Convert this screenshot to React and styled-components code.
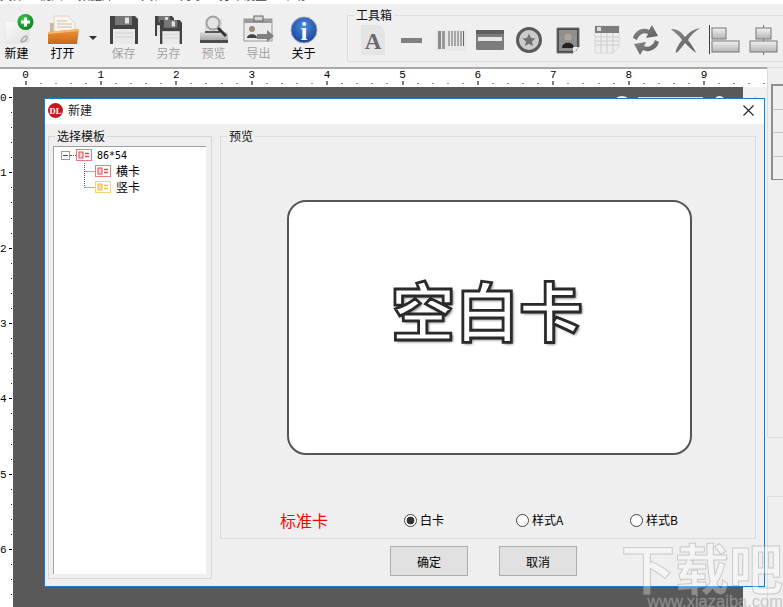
import React from "react";
import styled, { createGlobalStyle } from "styled-components";

const GlobalStyle = createGlobalStyle`
    html, body {
        margin: 0;
        padding: 0;
        background: #fff;
    }
    body {
        font-family: "Noto Sans CJK SC", "Liberation Sans", sans-serif;
        font-size: 12px;
        color: #000;
    }
`;

const Page = styled.div`
    position: relative;
    width: 783px;
    height: 607px;
    overflow: hidden;
    display: flex;
    flex-direction: column;
    background: #fff;
`;

const MenuStrip = styled.div`
    height: 4px;
    flex: none;
    overflow: hidden;
    display: flex;
    gap: 15px;
    background: #fff;
`;

const MenuItem = styled.span`
    margin-top: -12px;
    font-size: 12px;
    line-height: 14px;
    white-space: nowrap;
    color: #444;
`;

const Toolbar = styled.div`
    height: 63px;
    flex: none;
    display: flex;
    background: #efefef;
`;

const ToolButton = styled.div`
    width: ${(p) => p.$width || 45}px;
    margin-right: ${(p) => p.$gap || 0}px;
    flex: none;
    padding-top: 10px;
    display: flex;
    flex-direction: column;
    align-items: center;
`;

const ToolIcon = styled.svg`
    width: ${(p) => p.$size || 30}px;
    height: 30px;
    flex: none;
    overflow: visible;
`;

const ToolLabel = styled.span`
    margin-top: 2px;
    font-size: 12px;
    line-height: 14px;
    white-space: nowrap;
    color: ${(p) => (p.$disabled ? "#a3a3a3" : "#000")};
`;

const DropArrow = styled.div`
    width: 16px;
    flex: none;
    display: flex;
    justify-content: center;
    padding-top: 32px;

    &::before {
        content: "";
        width: 0;
        height: 0;
        border-left: 4px solid transparent;
        border-right: 4px solid transparent;
        border-top: 4px solid #333;
    }
`;

const ToolBox = styled.fieldset`
    margin: 4px 0 0 21px;
    padding: 0 0 0 5px;
    height: 54px;
    min-width: 0;
    flex: none;
    width: 470px;
    box-sizing: border-box;
    border: 1px solid #dcdcdc;
    display: flex;
`;

const GroupTitle = styled.legend`
    margin-left: ${(p) => p.$inset ?? 6}px;
    padding: 0 2px;
    font-size: 12px;
    line-height: 14px;
    color: #111;
`;

const BoxCell = styled.div`
    width: 39px;
    flex: none;
    display: flex;
    justify-content: center;
    padding-top: 3px;
`;

const Workspace = styled.div`
    flex: 1;
    min-height: 0;
    display: flex;
`;

const EditorArea = styled.div`
    width: 767px;
    flex: none;
    display: flex;
    flex-direction: column;
    border-top: 2px solid #a9a9a9;
    box-sizing: border-box;
`;

const RulerSvg = styled.svg`
    display: block;
    flex: none;
    background: #fff;
`;

const RulerText = styled.text`
    font-family: "Liberation Mono", monospace;
    font-size: 11px;
    fill: #000;
`;

const EditorRow = styled.div`
    flex: 1;
    min-height: 0;
    display: flex;
`;

const Canvas = styled.div`
    position: relative;
    width: 730px;
    flex: none;
    background: #595959;
`;

const CanvasShape = styled.div`
    position: absolute;
    top: ${(p) => p.$top}px;
    left: ${(p) => p.$left}px;
    width: ${(p) => p.$width}px;
    height: 20px;
    background: ${(p) => p.$color};
    border-radius: ${(p) => (p.$round ? "50%" : "0")};
`;

const ScrollColumn = styled.div`
    width: 24px;
    flex: none;
    background: #f1f1f1;
    display: flex;
    justify-content: center;
    padding-top: 9px;
    box-sizing: border-box;
`;

const ScrollArrow = styled.svg`
    width: 10px;
    height: 10px;
`;

const SidePanel = styled.div`
    flex: 1;
    display: flex;
    flex-direction: column;
    background: #efefef;
`;

const PanelTop = styled.div`
    height: 371px;
    flex: none;
    box-sizing: border-box;
    padding: 16px 0 0 3px;
    border-left: 1px solid #dcdcdc;
    border-bottom: 1px solid #dcdcdc;
    border-top: 1px solid #dcdcdc;
`;

const PropGrid = styled.div`
    height: 96px;
    box-sizing: border-box;
    border-left: 2px solid #8f8f8f;
    border-top: 2px solid #8f8f8f;
    border-bottom: 1px solid #8f8f8f;
    display: flex;
    flex-direction: column;
`;

const PropRow = styled.div`
    flex: 1;
    border-bottom: 1px solid #c4c4c4;

    &:last-child {
        border-bottom: none;
    }
`;

const PanelBottom = styled.div`
    margin-top: 58px;
    flex: 1;
    border-left: 1px solid #dcdcdc;
    border-top: 1px solid #dcdcdc;
`;

const Dialog = styled.div`
    position: absolute;
    left: 44px;
    top: 98px;
    width: 721px;
    height: 489px;
    box-sizing: border-box;
    border: 1px solid #0a7fd9;
    background: #efefef;
    display: flex;
    flex-direction: column;
`;

const TitleBar = styled.div`
    height: 25px;
    flex: none;
    box-sizing: border-box;
    background: #fff;
    display: flex;
    align-items: center;
    padding: 0 10px 3px 3px;
`;

const DialogTitle = styled.span`
    margin-left: 5px;
    flex: 1;
    font-size: 12px;
    line-height: 14px;
    color: #222;
`;

const DialogBody = styled.div`
    flex: 1;
    min-height: 0;
    padding: 5px 0 0 3px;
    display: flex;
    gap: 8px;
`;

const TemplateGroup = styled.fieldset`
    margin: 0;
    padding: 3px 5px 4px 4px;
    width: 164px;
    height: 450px;
    box-sizing: border-box;
    min-width: 0;
    border: 1px solid #d6d6d6;
`;

const Tree = styled.div`
    height: 428px;
    box-sizing: border-box;
    background: #fff;
    border-left: 1px solid #a0a0a0;
    border-top: 1px solid #a0a0a0;
`;

const TreeRow = styled.div`
    height: 16px;
    display: flex;
    align-items: center;
    padding-left: ${(p) => p.$indent}px;
`;

const Expander = styled.span`
    width: 9px;
    height: 9px;
    box-sizing: border-box;
    flex: none;
    border: 1px solid #999;
    background: #fff;
    display: flex;
    align-items: center;
    justify-content: center;

    &::before {
        content: "";
        width: 5px;
        height: 1px;
        background: #2a4fa8;
    }
`;

const DotStub = styled.span`
    width: 6px;
    flex: none;
    border-top: 1px dotted #555;
`;

const TreeLabel = styled.span`
    margin-left: 5px;
    font-size: 12px;
    line-height: 16px;
    white-space: nowrap;
`;

const SizeLabel = styled(TreeLabel)`
    font-family: "DejaVu Sans Mono", monospace;
    font-size: 10px;
    padding-top: 1px;
`;

const RightColumn = styled.div`
    width: 536px;
    flex: none;
    display: flex;
    flex-direction: column;
`;

const PreviewGroup = styled.fieldset`
    margin: 0;
    padding: 57px 0 8px;
    min-width: 0;
    box-sizing: border-box;
    border: 1px solid #dcdcdc;
`;

const CardPreview = styled.div`
    margin-left: 66px;
    width: 405px;
    height: 255px;
    box-sizing: border-box;
    border: 2px solid #555;
    border-radius: 19px;
    background: #fff;
    display: flex;
    align-items: center;
    justify-content: center;
    padding: 0 5px 39px 0;
`;

const BlankTitle = styled.span`
    font-family: "Noto Sans CJK SC", sans-serif;
    font-size: 64px;
    font-weight: 700;
    line-height: 70px;
    color: #fff;
    -webkit-text-stroke: 2.8px #2a2a2a;
    text-shadow: 1px 1px 3px #666, 2px 2px 3px #aaa;
    white-space: nowrap;
`;

const OptionRow = styled.div`
    margin-top: 55px;
    height: 20px;
    padding-left: 59px;
    display: grid;
    grid-template-columns: 124px 112px 114px auto;
    align-items: center;
`;

const CardKind = styled.span`
    font-size: 16px;
    line-height: 20px;
    color: #ff0000;
`;

const RadioLabel = styled.label`
    display: flex;
    align-items: center;
    gap: 3px;
    font-size: 12px;
    line-height: 16px;
`;

const RadioInput = styled.input`
    appearance: none;
    margin: 0;
    width: 13px;
    height: 13px;
    box-sizing: border-box;
    border: 1px solid #444;
    border-radius: 50%;
    background: #fff;

    &:checked {
        background: radial-gradient(circle, #333 0 3.6px, #fff 4.2px);
    }
`;

const ButtonRow = styled.div`
    margin: 7px 0 0 170px;
    display: flex;
    gap: 31px;
`;

const DialogButton = styled.button`
    width: 78px;
    height: 30px;
    padding: 0;
    box-sizing: border-box;
    border: 1px solid #adadad;
    background: #e1e1e1;
    font-family: inherit;
    font-size: 12px;
    color: #000;
`;

const Watermark = styled.div`
    position: absolute;
    right: 0;
    bottom: -1px;
    width: 166px;
    display: flex;
    flex-direction: column;
    align-items: flex-end;
    pointer-events: none;
`;

const WatermarkMain = styled.span`
    font-family: "Noto Sans CJK SC", sans-serif;
    font-size: 54px;
    font-weight: 700;
    line-height: 54px;
    color: rgba(255, 255, 255, 0.32);
    -webkit-text-stroke: 1px rgba(110, 110, 110, 0.3);
    white-space: nowrap;
`;

const WatermarkUrl = styled.span`
    font-family: "Liberation Sans", sans-serif;
    font-size: 16.5px;
    line-height: 14px;
    color: rgba(170, 170, 170, 0.55);
    -webkit-text-stroke: 0.4px rgba(200, 200, 200, 0.3);
    white-space: nowrap;
`;

const menus = ["文件", "视图", "数据库", "工具栏", "对象", "打印设置", "帮助"];

const rulerMarks = [0, 1, 2, 3, 4, 5, 6, 7, 8, 9];

const TopRuler = () => {
    const dots = [];
    for (let i = 0; i < 50; i++) {
        if (i % 5 !== 0) dots.push(12.5 + i * 15.08);
    }
    return (
        <RulerSvg width="767" height="18" viewBox="0 0 767 18">
            {rulerMarks.map((n) => {
                const x = 25.5 + n * 75.4;
                return (
                    <g key={n}>
                        <RulerText x={x} y="9" textAnchor="middle">{n}</RulerText>
                        <rect x={Math.round(x) - 0.5} y="12" width="1" height="4" fill="#000" />
                    </g>
                );
            })}
            {dots.map((x) => (
                <rect key={x} x={Math.round(x + 13) - 0.5} y="14" width="1" height="1" fill="#222" />
            ))}
        </RulerSvg>
    );
};

const LeftRuler = () => {
    const dots = [];
    for (let i = 0; i < 36; i++) {
        if (i % 5 !== 0) dots.push(i * 15.07);
    }
    return (
        <RulerSvg width="13" height="521" viewBox="0 0 13 521">
            {[0, 1, 2, 3, 4, 5, 6].map((n) => {
                const y = 10 + n * 75.33;
                return (
                    <g key={n}>
                        <RulerText x="0" y={y + 4}>{n}</RulerText>
                        <rect x="9" y={Math.round(y)} width="3" height="1" fill="#000" />
                    </g>
                );
            })}
            {dots.map((y) => (
                <rect key={y} x="11" y={Math.round(y + 10)} width="1" height="1" fill="#222" />
            ))}
        </RulerSvg>
    );
};

const NewIcon = () => (
    <ToolIcon viewBox="0 0 30 30">
        <defs>
            <linearGradient id="newPage" x1="0" y1="0" x2="1" y2="1">
                <stop offset="0" stopColor="#fcfcfc" />
                <stop offset="1" stopColor="#dedede" />
            </linearGradient>
            <radialGradient id="newPlus" cx="0.4" cy="0.35" r="0.7">
                <stop offset="0" stopColor="#43d04a" />
                <stop offset="1" stopColor="#0a7a24" />
            </radialGradient>
        </defs>
        <path d="M3 7 L20 7 L27 14 L27 29 L3 29 Z" fill="url(#newPage)" stroke="#e6e6e6" />
        <path d="M19 27 C21 23 24 21 25 23 C26 25 22 28 20 28 Z" fill="none" stroke="#a8a8a8" strokeWidth="1.5" />
        <circle cx="23.5" cy="8" r="8" fill="url(#newPlus)" />
        <path d="M23.5 3.5 V12.5 M19 8 H28" stroke="#fff" strokeWidth="3" />
    </ToolIcon>
);

const OpenIcon = () => (
    <ToolIcon viewBox="0 0 32 30" $size={32}>
        <defs>
            <linearGradient id="openFolder" x1="0" y1="0" x2="0" y2="1">
                <stop offset="0" stopColor="#ef9638" />
                <stop offset="1" stopColor="#c9661a" />
            </linearGradient>
        </defs>
        <path d="M3 9 L8 9 L8 20 L3 20 Z" fill="#c9b9a0" />
        <path d="M7 2 L21 2 L28 9 L28 20 L7 20 Z" fill="#f7f4ec" stroke="#ddd6c6" />
        <path d="M10 7 H20 M10 10 H25 M10 13 H25" stroke="#c9c0ae" />
        <path d="M1 18 L32 15 L30 30 L1 30 Z" fill="url(#openFolder)" />
        <path d="M1 18 L32 15 L32 17 L1 20 Z" fill="#f7b96a" />
    </ToolIcon>
);

const Floppy = ({ x = 0, y = 0, w = 28, h = 28 }) => (
    <g transform={`translate(${x} ${y}) scale(${w / 28} ${h / 28})`}>
        <path d="M0 0 H25 L28 3 V28 H0 Z" fill="#434343" />
        <rect x="5" y="0" width="17" height="9" fill="#777" />
        <rect x="15" y="1.5" width="4" height="6" fill="#e4e4e4" />
        <rect x="3" y="13" width="22" height="15" fill="#e9e9e9" />
        <path d="M5 17 H23 M5 21 H23" stroke="#cfcfcf" />
    </g>
);

const SaveIcon = () => (
    <ToolIcon viewBox="0 0 30 30">
        <g transform="translate(1 2)"><Floppy /></g>
    </ToolIcon>
);

const SaveAsIcon = () => (
    <ToolIcon viewBox="0 0 30 30">
        <Floppy x={1} y={2} w={19} h={20} />
        <Floppy x={6} y={6} w={22} h={24} />
    </ToolIcon>
);

const PreviewIcon = () => (
    <ToolIcon viewBox="0 0 30 30">
        <defs>
            <linearGradient id="printerBody" x1="0" y1="0" x2="0" y2="1">
                <stop offset="0" stopColor="#dedede" />
                <stop offset="1" stopColor="#a2a2a2" />
            </linearGradient>
        </defs>
        <rect x="6" y="5" width="17" height="13" fill="#dcdcdc" />
        <path d="M1 18 H29 V27 H1 Z" fill="url(#printerBody)" />
        <rect x="1" y="26" width="28" height="3" fill="#4c4c4c" />
        <rect x="6" y="17" width="15" height="2" fill="#555" />
        <circle cx="14" cy="9" r="6.5" fill="#e4e4e4" stroke="#a2a2a2" strokeWidth="2" />
        <path d="M19 14 L27 22" stroke="#333" strokeWidth="3" />
    </ToolIcon>
);

const ExportIcon = () => (
    <ToolIcon viewBox="0 0 32 30" $size={32}>
        <rect x="1" y="5" width="28" height="22" fill="#eaeaea" stroke="#9a9a9a" />
        <rect x="1" y="5" width="28" height="4" fill="#9a9a9a" />
        <rect x="11" y="2" width="9" height="5" fill="#d8d8d8" stroke="#666" />
        <circle cx="9" cy="15" r="3" fill="#9a8a78" />
        <path d="M4 24 C4 19 14 19 14 24 Z" fill="#444" />
        <path d="M14 20 H24 V16 L31 22 L24 28 V25 H14 Z" fill="#808080" />
    </ToolIcon>
);

const AboutIcon = () => (
    <ToolIcon viewBox="0 0 30 30">
        <defs>
            <radialGradient id="aboutBall" cx="0.5" cy="0.35" r="0.7">
                <stop offset="0" stopColor="#4d8be0" />
                <stop offset="1" stopColor="#123f96" />
            </radialGradient>
        </defs>
        <circle cx="15" cy="16" r="13" fill="url(#aboutBall)" stroke="#9aa4b4" />
        <text x="15" y="26" textAnchor="middle" fontFamily="Liberation Serif, serif" fontWeight="700" fontSize="25" fill="#fff">i</text>
    </ToolIcon>
);

const GrayDefs = () => (
    <svg width="0" height="0" style={{ position: "absolute" }}>
        <defs>
            <linearGradient id="grayBar" x1="0" y1="0" x2="0" y2="1">
                <stop offset="0" stopColor="#f2f2f2" />
                <stop offset="1" stopColor="#b4b4b4" />
            </linearGradient>
            <linearGradient id="grayArrow" x1="0" y1="0" x2="1" y2="1">
                <stop offset="0" stopColor="#8a8a8a" />
                <stop offset="1" stopColor="#5c5c5c" />
            </linearGradient>
        </defs>
    </svg>
);

const boxIcons = [
    <>
        <path d="M3 0 H21 L27 6 V30 H3 Z" fill="#e4e4e4" />
        <text x="15" y="24" textAnchor="middle" fontFamily="Liberation Serif, serif" fontWeight="700" fontSize="23" fill="#6a6a6a">A</text>
    </>,
    <rect x="4" y="13" width="21" height="5" fill="#808080" />,
    <>
        <rect x="0" y="5" width="30" height="21" fill="#e8e8e8" />
        <rect x="2" y="6" width="3" height="18" fill="#8a8a8a" />
        <rect x="6" y="6" width="3" height="18" fill="#9a9a9a" />
        <path d="M13 6 V21 M16 6 V21 M19 6 V21 M22 6 V21 M25 6 V21 M27.5 6 V21" stroke="#666" />
    </>,
    <>
        <rect x="1" y="5" width="28" height="20" rx="1" fill="#7c7c7c" />
        <rect x="1" y="5" width="28" height="4" fill="#5f5f5f" />
        <rect x="3" y="12" width="24" height="4" fill="#e6e6e6" />
    </>,
    <>
        <circle cx="15" cy="15" r="11.5" fill="#cbcbcb" stroke="#5a5a5a" strokeWidth="3" />
        <path d="M15 8.5 L17 13 L21.5 13.5 L18 16.5 L19 21 L15 18.7 L11 21 L12 16.5 L8.5 13.5 L13 13 Z" fill="#707070" />
    </>,
    <>
        <path d="M4 3 H26 V22 L20 28 H4 Z" fill="#4a4a4a" stroke="#777" />
        <rect x="6" y="5" width="18" height="21" fill="#8f8f8f" />
        <circle cx="15" cy="12" r="3.5" fill="#b0a49a" />
        <path d="M9 23 C9 16 21 16 21 23 Z" fill="#222" />
        <path d="M20 28 L26 22 L20 22 Z" fill="#eee" />
    </>,
    <>
        <path d="M3 1 H27 V22 L21 28 H3 Z" fill="#ededed" stroke="#dadada" />
        <rect x="3" y="1" width="24" height="7" fill="#7c7c7c" />
        <rect x="5" y="2" width="4" height="4" fill="#dcdcdc" />
        <path d="M3 12 H27 M3 16 H27 M3 20 H27 M9 8 V28 M15 8 V28 M21 8 V28" stroke="#cecece" />
    </>,
    <>
        <path d="M2 13 C4 5 13 2 18 5 L21 0 L27 11 L15 13 L17 9 C13 7 8 9 6 15 Z" fill="url(#grayArrow)" />
        <path d="M28 17 C26 25 17 28 12 25 L9 30 L3 19 L15 17 L13 21 C17 23 22 21 24 15 Z" fill="url(#grayArrow)" />
    </>,
    <>
        <path d="M1 4 C8 3 13 9 15 12 C19 7 24 4 30 3 C24 7 20 11 18 15 C21 19 24 23 26 28 C21 24 18 21 15 18 C12 22 9 26 6 28 C5 26 8 20 12 15 C9 10 5 8 1 4 Z" fill="url(#grayArrow)" />
    </>,
    <>
        <rect x="0" y="0" width="1" height="29" fill="#444" />
        <rect x="3" y="3" width="14" height="11" fill="url(#grayBar)" stroke="#777" />
        <rect x="3" y="16" width="27" height="11" fill="url(#grayBar)" stroke="#777" />
    </>,
    <>
        <rect x="15" y="0" width="1" height="30" fill="#777" />
        <rect x="8" y="3" width="15" height="11" fill="url(#grayBar)" stroke="#777" />
        <rect x="2" y="16" width="27" height="11" fill="url(#grayBar)" stroke="#777" />
    </>,
];

const CardGlyph = ({ color, fill }) => (
    <svg width="16" height="12" viewBox="0 0 16 12" style={{ flex: "none", display: "block" }}>
        <rect x="0.5" y="0.5" width="15" height="11" fill="#fff" stroke={color} />
        <rect x="3" y="3" width="4" height="6" fill="#fbd3d3" stroke={fill} />
        <path d="M9 4.5 H13 M9 7.5 H13" stroke={fill} strokeWidth="1.4" />
    </svg>
);

const TreeLink = ({ last }) => (
    <svg width="11" height="16" viewBox="0 0 11 16" style={{ flex: "none", display: "block" }}>
        <path d={last ? "M0.5 0 V8 M0.5 8.5 H11" : "M0.5 0 V16 M0.5 8.5 H11"} stroke="#555" strokeDasharray="1 1" fill="none" />
    </svg>
);

const App = () => {
    return (
        <Page>
            <GlobalStyle />
            <GrayDefs />
            <MenuStrip>
                {menus.map((m) => <MenuItem key={m}>{m}</MenuItem>)}
            </MenuStrip>
            <Toolbar>
                <ToolButton $width={33} $gap={7}><NewIcon /><ToolLabel>新建</ToolLabel></ToolButton>
                <ToolButton><OpenIcon /><ToolLabel>打开</ToolLabel></ToolButton>
                <DropArrow />
                <ToolButton><SaveIcon /><ToolLabel $disabled>保存</ToolLabel></ToolButton>
                <ToolButton><SaveAsIcon /><ToolLabel $disabled>另存</ToolLabel></ToolButton>
                <ToolButton><PreviewIcon /><ToolLabel $disabled>预览</ToolLabel></ToolButton>
                <ToolButton><ExportIcon /><ToolLabel $disabled>导出</ToolLabel></ToolButton>
                <ToolButton><AboutIcon /><ToolLabel>关于</ToolLabel></ToolButton>
                <ToolBox>
                    <GroupTitle $inset={1}>工具箱</GroupTitle>
                    {boxIcons.map((icon, i) => (
                        <BoxCell key={i}>
                            <ToolIcon viewBox="0 0 30 30">{icon}</ToolIcon>
                        </BoxCell>
                    ))}
                </ToolBox>
            </Toolbar>
            <Workspace>
                <EditorArea>
                    <TopRuler />
                    <EditorRow>
                        <LeftRuler />
                        <Canvas>
                            <CanvasShape $top={9} $left={599} $width={20} $color="#f4eeee" $round />
                            <CanvasShape $top={10} $left={625} $width={65} $color="#dedede" />
                            <CanvasShape $top={9} $left={699} $width={15} $color="#f2f2f2" $round />
                        </Canvas>
                        <ScrollColumn>
                            <ScrollArrow viewBox="0 0 10 10">
                                <path d="M1 6 L5 2 L9 6" fill="none" stroke="#c9c9c9" strokeWidth="2" />
                            </ScrollArrow>
                        </ScrollColumn>
                    </EditorRow>
                </EditorArea>
                <SidePanel>
                    <PanelTop>
                        <PropGrid>
                            <PropRow />
                            <PropRow />
                            <PropRow />
                            <PropRow />
                        </PropGrid>
                    </PanelTop>
                    <PanelBottom />
                </SidePanel>
            </Workspace>

            <Dialog>
                <TitleBar>
                    <svg width="15" height="15" viewBox="0 0 15 15">
                        <circle cx="7.5" cy="7.5" r="7.5" fill="#c9171e" />
                        <text x="7.5" y="10.5" textAnchor="middle" fontFamily="Liberation Serif, serif" fontWeight="700" fontSize="8.5" fill="#fff">DL</text>
                    </svg>
                    <DialogTitle>新建</DialogTitle>
                    <svg width="11" height="11" viewBox="0 0 11 11">
                        <path d="M0.5 0.5 L10.5 10.5 M10.5 0.5 L0.5 10.5" stroke="#222" strokeWidth="1.1" />
                    </svg>
                </TitleBar>
                <DialogBody>
                    <TemplateGroup>
                        <GroupTitle $inset={2}>选择模板</GroupTitle>
                        <Tree>
                            <TreeRow $indent={7}>
                                <Expander />
                                <DotStub />
                                <CardGlyph color="#e57c82" fill="#e8474f" />
                                <SizeLabel>86*54</SizeLabel>
                            </TreeRow>
                            <TreeRow $indent={30}>
                                <TreeLink />
                                <CardGlyph color="#e57c82" fill="#e8474f" />
                                <TreeLabel>横卡</TreeLabel>
                            </TreeRow>
                            <TreeRow $indent={30}>
                                <TreeLink last />
                                <CardGlyph color="#fbcf7a" fill="#f8c020" />
                                <TreeLabel>竖卡</TreeLabel>
                            </TreeRow>
                        </Tree>
                    </TemplateGroup>
                    <RightColumn>
                        <PreviewGroup>
                            <GroupTitle>预览</GroupTitle>
                            <CardPreview>
                                <BlankTitle>空白卡</BlankTitle>
                            </CardPreview>
                            <OptionRow>
                                <CardKind>标准卡</CardKind>
                                <RadioLabel><RadioInput type="radio" name="style" defaultChecked />白卡</RadioLabel>
                                <RadioLabel><RadioInput type="radio" name="style" />样式A</RadioLabel>
                                <RadioLabel><RadioInput type="radio" name="style" />样式B</RadioLabel>
                            </OptionRow>
                        </PreviewGroup>
                        <ButtonRow>
                            <DialogButton>确定</DialogButton>
                            <DialogButton>取消</DialogButton>
                        </ButtonRow>
                    </RightColumn>
                </DialogBody>
            </Dialog>

            <Watermark>
                <WatermarkMain>下载吧</WatermarkMain>
                <WatermarkUrl>www.xiazaiba.com</WatermarkUrl>
            </Watermark>
        </Page>
    );
};

export default App;
